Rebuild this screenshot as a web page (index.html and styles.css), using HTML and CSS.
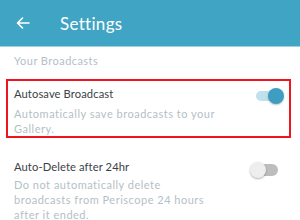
FILE: index.html
```
<!doctype html>
<html>
<head>
<meta charset="utf-8">
<title>Settings</title>
<link rel="stylesheet" href="styles.css">
</head>
<body>

<div class="topbar">
  <svg class="back" width="14" height="12" viewBox="0 0 14 12">
    <path d="M13 6H1.5M6.5 1L1.5 6l5 5" fill="none" stroke="#fff" stroke-width="1.6" stroke-linecap="round" stroke-linejoin="round"/>
  </svg>
  <div class="title">Settings</div>
</div>

<div class="group-label">Your Broadcasts</div>

<div class="setting picked">
  <div class="text">
    <div class="name">Autosave Broadcast</div>
    <div class="desc">Automatically save broadcasts to your Gallery.</div>
  </div>
  <div class="switch on"><span class="knob"></span></div>
</div>

<div class="setting">
  <div class="text">
    <div class="name">Auto-Delete after 24hr</div>
    <div class="desc">Do not automatically delete broadcasts from Periscope 24 hours after it ended.</div>
  </div>
  <div class="switch off"><span class="knob"></span></div>
</div>

</body>
</html>
```

FILE: styles.css
```
html, body { margin:0; padding:0; background:#fff; }

body {
  width:300px;
  height:220px;
  overflow:hidden;
  font-family: Lato, "Open Sans", sans-serif;
}

.topbar {
  display:flex;
  align-items:center;
  height:46px;
  padding-left:16px;
  background:#40a4c5;
  border-bottom:solid 1px #9ed0e0;
}

.back { display:block; }

.title {
  margin-left:30px;
  font-size:17px;
  color:#fff;
  letter-spacing:0.3px;
}

.group-label {
  margin-top:7px;
  padding-left:14px;
  font-size:11px;
  line-height:14px;
  color:#b4c0c5;
  letter-spacing:0.45px;
}

.setting {
  display:flex;
  justify-content:space-between;
  align-items:flex-start;
  margin-top:21px;
  padding:0 22px 0 14px;
}

.setting.picked {
  margin:11px 9px 0 6px;
  padding:5px 5px 0 6px;
  border:solid 2px #f0141e;
}

.name {
  font-size:11.2px;
  line-height:16px;
  color:#3b4246;
  letter-spacing:0.1px;
}

.desc {
  margin-top:4px;
  max-width:225px;
  font-size:11px;
  line-height:15px;
  color:#b4c0c5;
  letter-spacing:0.5px;
}

.setting:not(.picked) .desc { margin-top:2px; max-width:205px; }

.switch {
  position:relative;
  width:28px;
  height:16px;
  margin-top:2px;
}

.switch::before {
  content:"";
  position:absolute;
  top:3px;
  height:10px;
  border-radius:5px;
}

.knob {
  position:absolute;
  top:0;
  width:16px;
  height:16px;
  border-radius:50%;
}

.switch.on::before { left:0; width:26px; background:#bfe0ec; }
.switch.on .knob { right:0; background:#3d9ec2; box-shadow:0 1px 2px rgba(0,0,0,.25); }

.switch.off { margin-top:3px; }
.switch.off::before { right:0; width:24px; top:2px; height:12px; border-radius:6px; background:#bdbdbd; }
.switch.off .knob { left:0; background:#eeeeee; box-shadow:0 1px 2px rgba(0,0,0,.3); }
```
